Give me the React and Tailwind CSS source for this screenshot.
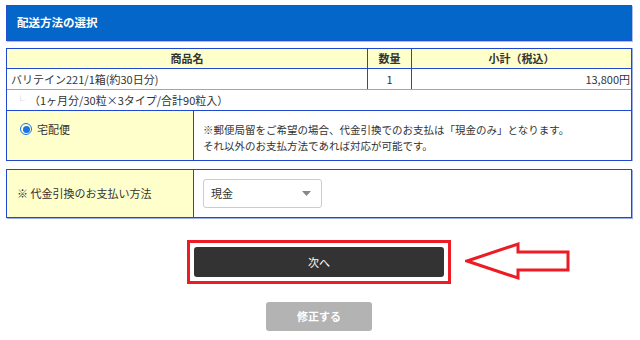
const font = { fontFamily: '"Noto Sans CJK JP", "Noto Sans", sans-serif' }

function Cell({ className = '', children }) {
  return <div className={`flex items-center px-[5px] ${className}`}>{children}</div>
}

export default function App() {
  return (
    <div className="w-[640px] h-[340px] bg-white text-[#333] text-[11px] leading-none overflow-hidden" style={font}>
      <div className="pl-[6px] pt-[5px] w-[632px]">
        {/* heading */}
        <div className="h-[36px] bg-[#0466c8] border border-[#2150d0] shadow-[1px_1px_0_#aebde9] flex items-center pl-[10px]">
          <span className="text-white font-bold text-[11.5px]">配送方法の選択</span>
        </div>

        {/* cart table */}
        <div className="mt-[7px] border border-[#2048d0] shadow-[1px_0_0_#9aaee8]">
          <div className="grid grid-cols-[361px_44px_1fr] h-[20px] bg-[#ffffcc] border-b border-[#2048d0]">
            <Cell className="justify-center font-bold border-r border-[#2048d0]">商品名</Cell>
            <Cell className="justify-center font-bold border-r border-[#2048d0]">数量</Cell>
            <Cell className="justify-center font-bold">小計（税込）</Cell>
          </div>
          <div className="grid grid-cols-[361px_44px_1fr] h-[21px] border-b border-[#8fa4e6]">
            <Cell className="border-r border-[#2048d0] pl-[4px]">バリテイン221/1箱(約30日分)</Cell>
            <Cell className="justify-center border-r border-[#2048d0]">1</Cell>
            <Cell className="justify-end pr-[1px]">13,800円</Cell>
          </div>
          <div className="h-[20px] flex items-center pl-[9px] gap-[4px]">
            <span className="text-[#bbb] text-[9px]">└</span>
            <span>（1ヶ月分/30粒×3タイプ/合計90粒入）</span>
          </div>
        </div>

        {/* delivery */}
        <div className="border border-t-0 border-[#2048d0] shadow-[1px_0_0_#9aaee8] grid grid-cols-[187px_1fr] h-[50px]">
          <div className="bg-[#ffffcc] border-r border-[#2048d0] flex items-start pt-[13px] pl-[13px] gap-[5px]">
            <span className="w-[12px] h-[12px] rounded-full border border-[#1a73e8] flex items-center justify-center mt-[-1px]">
              <span className="w-[7px] h-[7px] rounded-full bg-[#1a73e8]" />
            </span>
            <span>宅配便</span>
          </div>
          <div className="pl-[9px] pt-[11px] leading-[16px] text-[10.5px]">
            <div>※郵便局留をご希望の場合、代金引換でのお支払は「現金のみ」となります。</div>
            <div>それ以外のお支払方法であれば対応が可能です。</div>
          </div>
        </div>

        {/* payment */}
        <div className="mt-[8px] border border-[#2048d0] shadow-[1px_1px_0_#9aaee8] grid grid-cols-[187px_1fr] h-[49px]">
          <div className="bg-[#ffffcc] border-r border-[#2048d0] flex items-center pl-[10px]">
            ※ 代金引換のお支払い方法
          </div>
          <div className="flex items-center pl-[9px]">
            <div className="w-[119px] h-[29px] border border-[#ccc] rounded-[3px] flex items-center justify-between pl-[7px] pr-[10px]">
              <span>現金</span>
              <svg width="9" height="5" viewBox="0 0 9 5"><path d="M0 0h9L4.5 5z" fill="#888" /></svg>
            </div>
          </div>
        </div>
      </div>

      {/* buttons */}
      <div className="relative mt-[22px] flex justify-center">
        <div className="ml-[-2px] border-[3px] border-[#ed1c24] p-[4px]">
          <div className="w-[250px] h-[30px] bg-[#333] rounded-[3px] flex items-center justify-center text-white text-[11px]">
            次へ
          </div>
        </div>
        <svg className="absolute left-[465px] top-[1px]" width="106" height="40" viewBox="0 0 106 40">
          <path d="M2 20 L53 3 L53 11 L103 11 L103 29 L53 29 L53 37 Z" fill="none" stroke="#ed1c24" strokeWidth="3" strokeLinejoin="miter" />
        </svg>
      </div>
      <div className="mt-[18px] flex justify-center">
        <div className="ml-[-2px] w-[106px] h-[29px] bg-[#b3b3b3] rounded-[3px] flex items-center justify-center text-white font-bold text-[11px]">
          修正する
        </div>
      </div>
    </div>
  )
}
